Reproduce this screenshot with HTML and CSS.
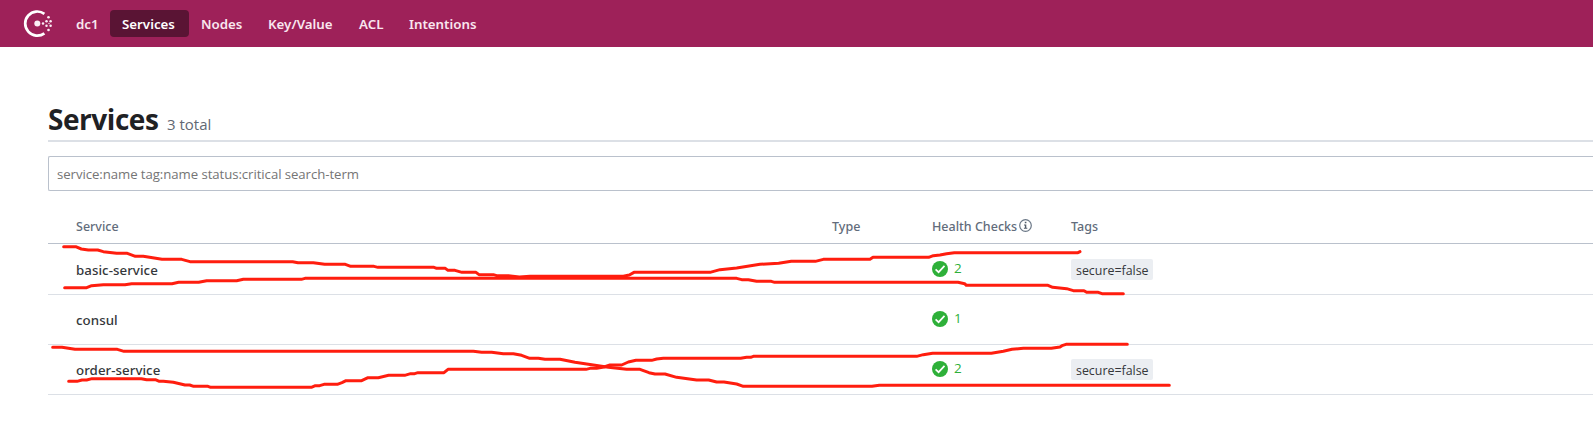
FILE: index.html
```html
<!DOCTYPE html>
<html lang="en">
<head>
<meta charset="utf-8">
<title>Services</title>
<link rel="stylesheet" href="styles.css">
</head>
<body>
<header class="topbar">
  <svg class="logo" viewBox="0 0 28 28" width="28" height="28" fill="#fbeef5">
    <path d="M20.4 3.8A12.1 12.1 0 1 0 20.4 23.4" fill="none" stroke="#fff" stroke-width="2.7"/>
    <circle cx="13.3" cy="13.6" r="3"/>
    <circle cx="19" cy="13.6" r="1.25"/>
    <circle cx="22.5" cy="11.2" r="1.25"/><circle cx="22.5" cy="15.8" r="1.25"/>
    <circle cx="24.5" cy="7.2" r="1.3"/><circle cx="24.5" cy="20" r="1.3"/>
    <circle cx="26.6" cy="11.2" r="1.25"/><circle cx="26.6" cy="15.8" r="1.25"/>
    <circle cx="25" cy="13.5" r=".7"/>
  </svg>
  <nav class="menu">
    <a class="dc">dc1</a><a class="services active">Services</a><a class="nodes">Nodes</a><a class="kv">Key/Value</a><a class="acl">ACL</a><a class="intentions">Intentions</a>
  </nav>
</header>
<main class="content">
  <div class="heading"><h1>Services</h1><em>3 total</em></div>
  <div class="search"><span>service:name tag:name status:critical search-term</span></div>
  <div class="table">
    <div class="row head">
      <span>Service</span><span>Type</span>
      <span class="health"><span class="h-health">Health Checks</span>
        <svg class="info" viewBox="0 0 13 13" width="13" height="13"><circle cx="6.5" cy="6.5" r="5.8" fill="none" stroke="#6a7786" stroke-width="1.2"/><path d="M5.8 2.8h1.6v1.5H5.8zM5 5.4h2.3v3.4h1v1H4.9v-1h1V6.4H5z" fill="#525c69"/></svg></span>
      <span>Tags</span>
    </div>
    <div class="row first"><b>basic-service</b><span></span>
      <span class="check"><svg viewBox="0 0 16 16" width="16" height="16"><circle cx="8" cy="8" r="8" fill="#2eb039"/><path d="M3.6 8.3 6.6 11.2 12.5 4.9" fill="none" stroke="#fff" stroke-width="1.7"/></svg><i>2</i></span>
      <span class="tag">secure=false</span></div>
    <div class="row"><b>consul</b><span></span>
      <span class="check"><svg viewBox="0 0 16 16" width="16" height="16"><circle cx="8" cy="8" r="8" fill="#2eb039"/><path d="M3.6 8.3 6.6 11.2 12.5 4.9" fill="none" stroke="#fff" stroke-width="1.7"/></svg><i>1</i></span><span></span></div>
    <div class="row"><b>order-service</b><span></span>
      <span class="check"><svg viewBox="0 0 16 16" width="16" height="16"><circle cx="8" cy="8" r="8" fill="#2eb039"/><path d="M3.6 8.3 6.6 11.2 12.5 4.9" fill="none" stroke="#fff" stroke-width="1.7"/></svg><i>2</i></span>
      <span class="tag">secure=false</span></div>
  </div>
</main>
<svg class="strokes" viewBox="0 0 1593 439" width="1593" height="439">
  <g transform="translate(40 205) scale(.33333)" fill="none" stroke="#ff1d0e" stroke-width="9" stroke-linecap="round" stroke-linejoin="round">
    <path d="M71 125H107L124 132 145 135H173L190 140 230 145H262L286 154H310L366 163H425L450 170H758L774 173H820L854 178H916L932 184H1002L1014 187H1182L1190 190H1216L1224 196H1245L1266 202H1308L1317 209H1360L1370 212H1405L1438 216 1470 214H1750L1768 210 1782 202H2010L2040 194 2090 189 2160 178 2216 175 2254 169H2326L2350 163H2490L2499 157H2666L2680 152 2700 150 2720 146 2743 143H3114L3120 140"/>
    <path d="M74 248H140L155 242 190 239H255L275 236H396L416 232H476L500 227H590L610 223H784L795 220H2090L2105 224H2125L2150 229H2194L2204 232H2754L2774 236 2779 241H3024L3038 247 3080 251 3100 257H3132L3140 262H3175L3186 266H3250"/>
    <path d="M38 427H66L105 433H232L252 439H1300L1325 442H1355L1390 446H1420L1445 451 1469 460H1495L1515 463H1560L1605 472 1660 480 1705 487 1760 493H1800L1827 503 1845 507H1875L1910 517 1970 525H2006L2030 531H2052L2090 537 2110 544H2496L2518 541H3388"/>
    <path d="M86 529H111L126 525H140L156 521H304L320 524H346L358 529H370L400 532 435 540H449L461 544H504L512 547H814L826 542H839L852 538H892L906 533 918 527H965L984 518H1015L1046 511H1094L1112 506H1124L1134 503H1212L1224 493H1638L1650 490H1670L1692 486 1710 480H1745L1765 471 1788 466H1835L1850 462 1870 460H2102L2120 457H2132L2140 454H2630L2650 449 2678 445H2854L2890 439 2916 433 2950 430H3034L3060 426 3066 422 3078 418H3262"/>
  </g>
</svg>
</body>
</html>
```
FILE: styles.css
```css
* { box-sizing: border-box; }
body { margin: 0; height: 439px; overflow: hidden; background: #fff; color: #1f2124; font-family: "Noto Sans", "Open Sans", sans-serif; font-size: 14px; line-height: 20px; white-space: nowrap; }
.topbar { height: 47px; background: #9e2159; display: flex; align-items: flex-start; padding: 10px 0 0 24px; }
.logo { flex: none; margin-right: 12px; overflow: visible; }
.menu { display: flex; color: #f9e6ef; font-family: "Noto Sans", sans-serif; font-size: 13.3px; font-weight: 600; line-height: 28px; }
.menu a { height: 27px; padding: 0 12px; border-radius: 4px; }
.menu .dc { width: 46px; }
.menu .active { background: #5a1434; color: #fff; }
.services { width: 79px; }
.nodes { width: 67px; }
.kv { width: 91px; }
.acl { width: 50px; }
.content { padding: 57px 0 0 48px; }
.heading { height: 38px; display: flex; align-items: baseline; gap: 9px; border-bottom: 2px solid #dce0e6; font-family: "Open Sans", sans-serif; line-height: 31px; }
.heading h1 { margin: 0; font-size: 28px; font-weight: 700; line-height: 31px; width: 110px; letter-spacing: -.45px; }
.heading em { font-style: normal; font-size: 15px; color: #626873; }
.search { height: 35px; margin-top: 14px; border: 1px solid #bac1cc; border-right: 0; border-radius: 2px 0 0 2px; padding: 7px 8px; color: #757575; font-family: "Open Sans", sans-serif; font-size: 13.2px; letter-spacing: -.06px; }
.row { display: grid; grid-template-columns: 756px 100px 139px 1fr; height: 50px; border-bottom: 1px solid #dce0e6; padding-left: 28px; align-items: start; padding-top: 15px; }
.row b { font-weight: 500; font-size: 13.3px; letter-spacing: .05px; color: #35373b; }
.row.head { height: 53px; padding-top: 26px; border-bottom-color: #bac1cc; color: #626c7b; font-weight: 500; font-size: 12.5px; line-height: 20px; }
.row.first { height: 51px; padding-top: 16px; }
.health { display: flex; gap: 4px; }
.h-health { width: 83px; }
.info { margin-top: 2px; }
.check { display: flex; gap: 6px; color: #2eb039; font-family: "Open Sans", sans-serif; margin-top: 1px; }
.check i { font-style: normal; font-size: 13.5px; line-height: 15px; }
.tag { width: 82px; height: 21px; margin-top: -1px; padding: 1px 0 0 5px; border-radius: 2px; background: #ebeef2; font-family: "Open Sans", sans-serif; font-size: 12.4px; line-height: 22px; color: #35373b; }
.strokes { position: absolute; left: 0; top: 0; }
```
